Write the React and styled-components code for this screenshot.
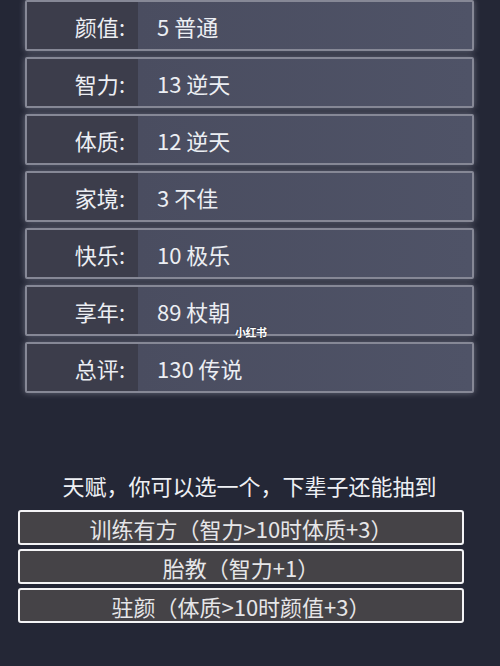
import React from "react";
import styled, { createGlobalStyle } from "styled-components";

const Global = createGlobalStyle`
  html, body { margin: 0; padding: 0; background: #242736; }
  body { font-family: "Noto Sans CJK SC", "Noto Sans", sans-serif; }
`;

const Page = styled.div`
  position: relative;
  width: 500px;
  height: 666px;
  overflow: hidden;
  background: #242736;
  display: flex;
  flex-direction: column;
`;

const StatList = styled.div`
  display: flex;
  flex-direction: column;
  gap: 6px;
  padding: 0 26px 0 25px;
`;

const StatRow = styled.div`
  display: flex;
  height: 51px;
  box-sizing: border-box;
  border: 2px solid #868896;
  border-radius: 2px;
  box-shadow: 0 0 6px rgba(190, 192, 210, 0.45);
  background: #4e5165;
`;

const Label = styled.div`
  width: 111px;
  background: #3c3d4b;
  display: flex;
  align-items: center;
  justify-content: flex-end;
  padding-right: 13px;
  box-sizing: border-box;
  color: #eceef3;
  font-size: 22px;
`;

const Value = styled.div`
  flex: 1;
  display: flex;
  align-items: center;
  padding-left: 19px;
  color: #eceef3;
  font-size: 22px;
  background: linear-gradient(90deg, #4a4d60 0%, #4f5367 100%);
`;

const Prompt = styled.div`
  margin-top: 77px;
  text-align: center;
  color: #eef0f4;
  font-size: 22px;
  line-height: 30px;
  padding-right: 1px;
`;

const TalentList = styled.div`
  margin-top: 10px;
  display: flex;
  flex-direction: column;
  gap: 4px;
  padding: 0 36px 0 18px;
`;

const Talent = styled.div`
  height: 35px;
  box-sizing: border-box;
  border: 2px solid #f4f4f6;
  border-radius: 3px;
  background: #454347;
  color: #e6e6e8;
  font-size: 22px;
  display: flex;
  align-items: center;
  justify-content: center;
`;

const Watermark = styled.div`
  position: absolute;
  left: 235px;
  top: 324px;
  color: #ffffff;
  font-size: 11px;
  font-weight: 700;
  letter-spacing: -0.5px;
  text-shadow: 0 0 2px rgba(0, 0, 0, 0.6);
`;

const stats = [
  ["颜值", "5 普通"],
  ["智力", "13 逆天"],
  ["体质", "12 逆天"],
  ["家境", "3 不佳"],
  ["快乐", "10 极乐"],
  ["享年", "89 杖朝"],
  ["总评", "130 传说"],
];

const talents = [
  "训练有方（智力>10时体质+3）",
  "胎教（智力+1）",
  "驻颜（体质>10时颜值+3）",
];

export default function App() {
  return (
    <Page>
      <Global />
      <StatList>
        {stats.map(([k, v]) => (
          <StatRow key={k}>
            <Label>{k}:</Label>
            <Value>{v}</Value>
          </StatRow>
        ))}
      </StatList>
      <Prompt>天赋，你可以选一个，下辈子还能抽到</Prompt>
      <TalentList>
        {talents.map((t) => (
          <Talent key={t}>{t}</Talent>
        ))}
      </TalentList>
      <Watermark>小红书</Watermark>
    </Page>
  );
}
